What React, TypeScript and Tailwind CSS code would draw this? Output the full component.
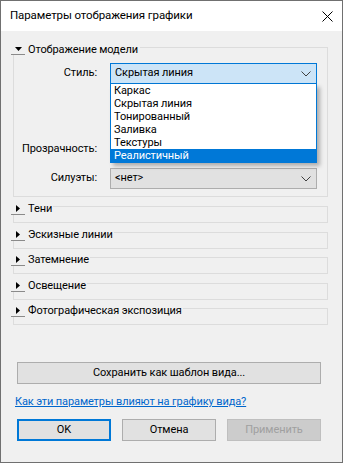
import React from "react";

const FONT = '"Segoe UI", Roboto, "Noto Sans", sans-serif';

function Chevron() {
  return (
    <svg width="10" height="6" viewBox="0 0 10 6" className="shrink-0">
      <path d="M0.5 0.5 L5 5 L9.5 0.5" fill="none" stroke="#404040" strokeWidth="1" />
    </svg>
  );
}

function ToggleButton({ open }: { open: boolean }) {
  return (
    <div className="w-[14px] h-[12px] bg-[#f0f0f0] border-b border-[#8a8a8a] flex items-center justify-center shrink-0">
      {open ? (
        <svg width="7" height="4" viewBox="0 0 7 4">
          <path d="M0 0 L7 0 L3.5 4 Z" fill="#000" />
        </svg>
      ) : (
        <svg width="4" height="7" viewBox="0 0 4 7">
          <path d="M0 0 L4 3.5 L0 7 Z" fill="#000" />
        </svg>
      )}
    </div>
  );
}

function CollapsedGroup({ title, mt }: { title: string; mt: string }) {
  return (
    <div className={`relative h-[22px] ${mt}`}>
      <div className="absolute left-[2px] right-0 top-[5px] h-[17px] border border-[#dcdcdc]" />
      <div className="relative flex items-center h-[13px] pt-[2px]">
        <ToggleButton open={false} />
        <span className="bg-[#f0f0f0] pl-[3px] pr-[1px] leading-[13px]">{title}</span>
      </div>
    </div>
  );
}

const items = ["Каркас", "Скрытая линия", "Тонированный", "Заливка", "Текстуры", "Реалистичный"];

export default function App() {
  return (
    <div
      className="w-[343px] h-[463px] border border-[#707070] bg-[#f0f0f0] flex flex-col text-[11px] tracking-[-0.1px] text-black overflow-hidden"
      style={{ fontFamily: FONT }}
    >
      {/* Title bar */}
      <div className="h-[30px] bg-white flex items-center justify-between pl-[9px] pr-[9px] shrink-0">
        <span className="text-[11.5px]">Параметры отображения графики</span>
        <svg width="11" height="11" viewBox="0 0 11 11">
          <path d="M0.5 0.5 L10.5 10.5 M10.5 0.5 L0.5 10.5" stroke="#000" strokeWidth="1" />
        </svg>
      </div>

      {/* Body */}
      <div className="flex flex-col pl-[10px] pr-[14px]">
        {/* Expanded group */}
        <div className="relative h-[154px] mt-[12px]">
          <div className="absolute left-[2px] right-0 top-[4px] bottom-0 border border-[#dcdcdc]" />
          <div className="relative flex items-center h-[12px]">
            <ToggleButton open={true} />
            <span className="bg-[#f0f0f0] pl-[3px] pr-[2px] leading-[13px]">Отображение модели</span>
          </div>

          <div className="relative flex flex-col">
            {/* Стиль row */}
            <div className="flex items-center mt-[8px] h-[21px]">
              <div className="w-[86px] text-right">Стиль:</div>
              <div className="relative ml-[13px] w-[207px]">
                <div className="h-[21px] bg-[#cce4f7] border border-[#0078d7] flex items-center justify-between pl-[4px] pr-[5px]">
                  <span>Скрытая линия</span>
                  <Chevron />
                </div>
                <div className="absolute left-0 top-full w-[207px] bg-white border border-[#0078d7] border-t-0 shadow-[3px_3px_4px_rgba(0,0,0,0.28)] z-10">
                  {items.map((it) => (
                    <div
                      key={it}
                      className={`h-[13px] leading-[13px] pl-[3px] ${
                        it === "Реалистичный" ? "bg-[#0078d7] text-white" : ""
                      }`}
                    >
                      {it}
                    </div>
                  ))}
                </div>
              </div>
            </div>

            {/* hidden rows under list */}
            <div className="h-[55px]" />

            {/* Прозрачность */}
            <div className="flex items-center h-[21px]">
              <div className="w-[86px] text-right">Прозрачность:</div>
            </div>

            {/* Силуэты */}
            <div className="flex items-center mt-[8px] h-[21px]">
              <div className="w-[86px] text-right">Силуэты:</div>
              <div className="ml-[13px] w-[207px] h-[21px] bg-[#e1e1e1] border border-[#adadad] flex items-center justify-between pl-[4px] pr-[5px]">
                <span>&lt;нет&gt;</span>
                <Chevron />
              </div>
            </div>
          </div>
        </div>

        <CollapsedGroup title="Тени" mt="mt-[4px]" />
        <CollapsedGroup title="Эскизные линии" mt="mt-[4px]" />
        <CollapsedGroup title="Затемнение" mt="mt-[3px]" />
        <CollapsedGroup title="Освещение" mt="mt-[4px]" />
        <CollapsedGroup title="Фотографическая экспозиция" mt="mt-[3px]" />
      </div>

      {/* Bottom */}
      <div className="flex flex-col pl-[16px] mt-[37px]">
        <div className="w-[304px] h-[22px] bg-[#e1e1e1] border border-[#adadad] flex items-center justify-center">
          Сохранить как шаблон вида...
        </div>
        <a className="mt-[10px] -ml-[2px] text-[#0066cc] underline leading-[15px] self-start cursor-pointer">
          Как эти параметры влияют на графику вида?
        </a>
        <div className="flex gap-[11px] mt-[10px]">
          <div className="w-[94px] h-[22px] bg-[#e1e1e1] border-2 border-[#0078d7] flex items-center justify-center">
            OK
          </div>
          <div className="w-[94px] h-[22px] bg-[#e1e1e1] border border-[#adadad] flex items-center justify-center">
            Отмена
          </div>
          <div className="w-[94px] h-[22px] bg-[#cccccc] border border-[#bfbfbf] text-[#a0a0a0] flex items-center justify-center">
            Применить
          </div>
        </div>
      </div>
    </div>
  );
}
